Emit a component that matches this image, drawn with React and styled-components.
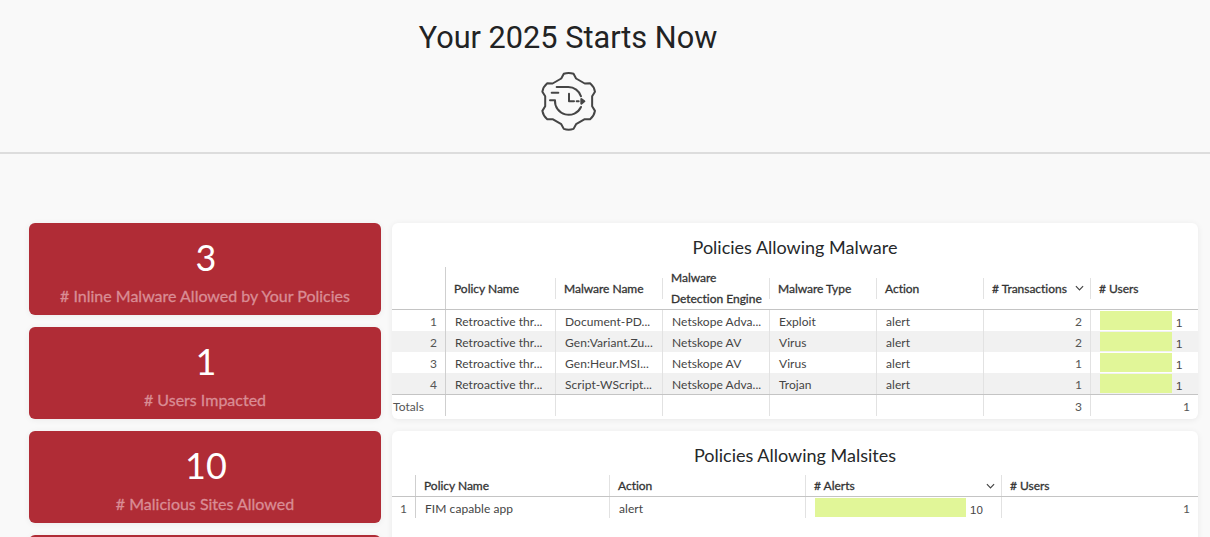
import React from 'react'
import styled, { createGlobalStyle } from 'styled-components'

const GlobalStyle = createGlobalStyle`
    html, body {
        margin: 0;
        padding: 0;
        background: #f9f9f9;
    }
    body {
        font-family: "Lato", "Liberation Sans", sans-serif;
    }
`;

const Page = styled.div`
    width: 1210px;
    height: 537px;
    overflow: hidden;
`;

const Header = styled.header`
    box-sizing: border-box;
    height: 154px;
    padding-top: 18px;
    border-bottom: 2px solid #dddddd;
    display: flex;
    flex-direction: column;
    align-items: center;
    gap: 11px;
`;

const Title = styled.h1`
    margin: 0;
    font-family: "Roboto", sans-serif;
    font-weight: 400;
    font-size: 30.7px;
    line-height: 40px;
    color: #222324;
    transform: translateX(-37px);
`;

const GearIcon = styled.svg`
    display: block;
    width: 76px;
    height: 76px;
    margin-top: -7px;
    transform: translateX(-37px);
`;

const Body = styled.main`
    display: grid;
    grid-template-columns: 352px 806px;
    column-gap: 11px;
    padding: 69px 12px 0 29px;
`;

const Column = styled.div`
    display: flex;
    flex-direction: column;
    gap: 12px;
`;

const Tile = styled.section`
    box-sizing: border-box;
    height: 92px;
    padding-top: 11px;
    border-radius: 6px;
    background: #b02c36;
    box-shadow: 0 1px 6px rgba(0, 0, 0, 0.06);
    text-align: center;
`;

const TileValue = styled.div`
    font-size: 36px;
    line-height: 46px;
    padding-left: 2px;
    color: #ffffff;
`;

const TileLabel = styled.div`
    font-size: 16px;
    line-height: 22px;
    margin-top: 5px;
    font-weight: 400;
    -webkit-text-stroke: 0.3px #d98d95;
    color: #d98d95;
`;

const Panel = styled.section`
    border-radius: 6px;
    background: #ffffff;
    box-shadow: 0 1px 6px rgba(0, 0, 0, 0.07);
    height: ${({ $height }) => $height}px;
    overflow: hidden;
`;

const PanelTitle = styled.h2`
    margin: 0;
    font-weight: 400;
    font-size: 18px;
    line-height: 24px;
    padding-top: 12px;
    height: 44px;
    box-sizing: border-box;
    text-align: center;
    color: #26282a;
`;

const Grid = styled.div`
    display: grid;
    grid-template-columns: ${({ $columns }) => $columns};
    font-size: 12px;
    letter-spacing: 0.06px;
    color: #444444;
`;

const Row = styled.div`
    display: grid;
    grid-column: 1 / -1;
    grid-template-columns: subgrid;
    grid-auto-rows: 21px;
    line-height: 23px;
    background: ${({ $striped }) => ($striped ? '#f1f1f1' : 'transparent')};
`;

const HeadRow = styled(Row)`
    grid-auto-rows: auto;
    line-height: 21px;
    border-bottom: 1px solid #c4c4c4;
`;

const TotalRow = styled(Row)`
    border-top: 1px solid #c4c4c4;
`;

const IndexHead = styled.div`
    border-right: 1px solid #cfcfcf;
`;

const HeadCell = styled.div`
    box-sizing: border-box;
    display: flex;
    align-items: center;
    justify-content: space-between;
    padding: 0 6px 0 9px;
    font-weight: 400;
    letter-spacing: -0.02px;
    -webkit-text-stroke: 0.3px #333333;
    color: #333333;
    background: linear-gradient(#e2e2e2, #e2e2e2) left center / 1px 21px no-repeat;

    ${IndexHead} + & {
        padding-left: 8px;
        background: none;
    }
`;

const HeadLabel = styled.span`
    display: block;
`;

const IndexCell = styled.div`
    box-sizing: border-box;
    padding-right: 8px;
    text-align: right;
    color: #555555;
    border-right: 1px solid #cfcfcf;
`;

const TotalLabel = styled(IndexCell)`
    padding: 0 0 0 1px;
    text-align: left;
`;

const Cell = styled.div`
    box-sizing: border-box;
    min-width: 0;
    padding: 0 0 0 9px;
    white-space: nowrap;
    overflow: hidden;
    text-align: ${({ $right }) => ($right ? 'right' : 'left')};
    padding-right: ${({ $right }) => ($right ? '8px' : '0')};
    color: ${({ $right }) => ($right ? '#555555' : '#444444')};
    border-left: 1px solid #e2e2e2;

    ${IndexCell} + & {
        border-left: none;
    }
`;

const BarCell = styled(Cell)`
    display: flex;
    align-items: flex-start;
    gap: 4px;
    padding: 1px 0 0 9px;
`;

const Bar = styled.div`
    flex: none;
    width: ${({ $width }) => $width}px;
    height: 19px;
    background: #e1f698;
`;

const BarValue = styled.span`
    font-family: "Liberation Sans", sans-serif;
    font-size: 11.5px;
    line-height: 15px;
    margin-top: 5px;
    color: #444444;
`;

const Chevron = styled.svg`
    flex: none;
    width: 9px;
    height: 6px;
`;

const SortChevron = () => (
    <Chevron viewBox="0 0 10 6" fill="none" stroke="#444444" strokeWidth="1.3">
        <path d="M1 1l4 4 4-4" />
    </Chevron>
)

// six teeth around the middle of the icon, one every 60deg
const gearPath = () => {
    const cx = 116
    const cy = 118
    const point = (radius, deg) => {
        const rad = (deg * Math.PI) / 180
        return `${(cx + radius * Math.cos(rad)).toFixed(1)} ${(cy + radius * Math.sin(rad)).toFixed(1)}`
    }
    const parts = []
    for (let tooth = 0; tooth < 6; tooth++) {
        const a = -90 + tooth * 60
        parts.push(`${tooth === 0 ? 'M' : 'L'}${point(72, a - 18)}`)
        parts.push(`L${point(84, a - 10)}`)
        parts.push(`Q${point(88, a)} ${point(84, a + 10)}`)
        parts.push(`L${point(72, a + 18)}`)
    }
    return parts.join(' ') + 'Z'
}

const malwareRows = [
    ['Retroactive thr...', 'Document-PD...', 'Netskope Adva...', 'Exploit', 'alert', 2, 1],
    ['Retroactive thr...', 'Gen:Variant.Zu...', 'Netskope AV', 'Virus', 'alert', 2, 1],
    ['Retroactive thr...', 'Gen:Heur.MSI...', 'Netskope AV', 'Virus', 'alert', 1, 1],
    ['Retroactive thr...', 'Script-WScript...', 'Netskope Adva...', 'Trojan', 'alert', 1, 1],
]

const tiles = [
    ['3', '# Inline Malware Allowed by Your Policies'],
    ['1', '# Users Impacted'],
    ['10', '# Malicious Sites Allowed'],
]

const App = () => {
    return (
        <Page>
            <GlobalStyle />
            <Header>
                <Title>Your 2025 Starts Now</Title>
                <GearIcon viewBox="0 0 228 228" fill="none" stroke="#454545" strokeWidth="6" strokeLinecap="round" strokeLinejoin="round">
                    <path d={gearPath()} />
                    <path d="M80 75H115A40 40 0 0 1 153 103" />
                    <path d="M153 135A41 41 0 0 1 75 115H60" />
                    <path d="M65 92H85" />
                    <path d="M117 95V118H132" />
                    <path d="M140 118H146" />
                    <path d="M154 111L163 118L154 125Z" fill="#454545" />
                </GearIcon>
            </Header>
            <Body>
                <Column>
                    {tiles.map(([value, label]) => (
                        <Tile key={label}>
                            <TileValue>{value}</TileValue>
                            <TileLabel>{label}</TileLabel>
                        </Tile>
                    ))}
                    <Tile />
                </Column>
                <Column>
                    <Panel $height={196}>
                        <PanelTitle>Policies Allowing Malware</PanelTitle>
                        <Grid $columns="54px 109px 107px 107px 107px 107px 107px 108px">
                            <HeadRow>
                                <IndexHead />
                                <HeadCell>Policy Name</HeadCell>
                                <HeadCell>Malware Name</HeadCell>
                                <HeadCell><HeadLabel>Malware<br />Detection Engine</HeadLabel></HeadCell>
                                <HeadCell>Malware Type</HeadCell>
                                <HeadCell>Action</HeadCell>
                                <HeadCell># Transactions <SortChevron /></HeadCell>
                                <HeadCell># Users</HeadCell>
                            </HeadRow>
                            {malwareRows.map((row, i) => (
                                <Row key={i} $striped={i % 2 === 1}>
                                    <IndexCell>{i + 1}</IndexCell>
                                    <Cell>{row[0]}</Cell>
                                    <Cell>{row[1]}</Cell>
                                    <Cell>{row[2]}</Cell>
                                    <Cell>{row[3]}</Cell>
                                    <Cell>{row[4]}</Cell>
                                    <Cell $right>{row[5]}</Cell>
                                    <BarCell>
                                        <Bar $width={72} />
                                        <BarValue>{row[6]}</BarValue>
                                    </BarCell>
                                </Row>
                            ))}
                            <TotalRow>
                                <TotalLabel>Totals</TotalLabel>
                                <Cell />
                                <Cell />
                                <Cell />
                                <Cell />
                                <Cell />
                                <Cell $right>3</Cell>
                                <Cell $right>1</Cell>
                            </TotalRow>
                        </Grid>
                    </Panel>
                    <Panel $height={200}>
                        <PanelTitle>Policies Allowing Malsites</PanelTitle>
                        <Grid $columns="24px 193px 196px 196px 197px">
                            <HeadRow>
                                <IndexHead />
                                <HeadCell>Policy Name</HeadCell>
                                <HeadCell>Action</HeadCell>
                                <HeadCell># Alerts <SortChevron /></HeadCell>
                                <HeadCell># Users</HeadCell>
                            </HeadRow>
                            <Row>
                                <IndexCell>1</IndexCell>
                                <Cell>FIM capable app</Cell>
                                <Cell>alert</Cell>
                                <BarCell>
                                    <Bar $width={151} />
                                    <BarValue>10</BarValue>
                                </BarCell>
                                <Cell $right>1</Cell>
                            </Row>
                        </Grid>
                    </Panel>
                </Column>
            </Body>
        </Page>
    )
}

export default App
